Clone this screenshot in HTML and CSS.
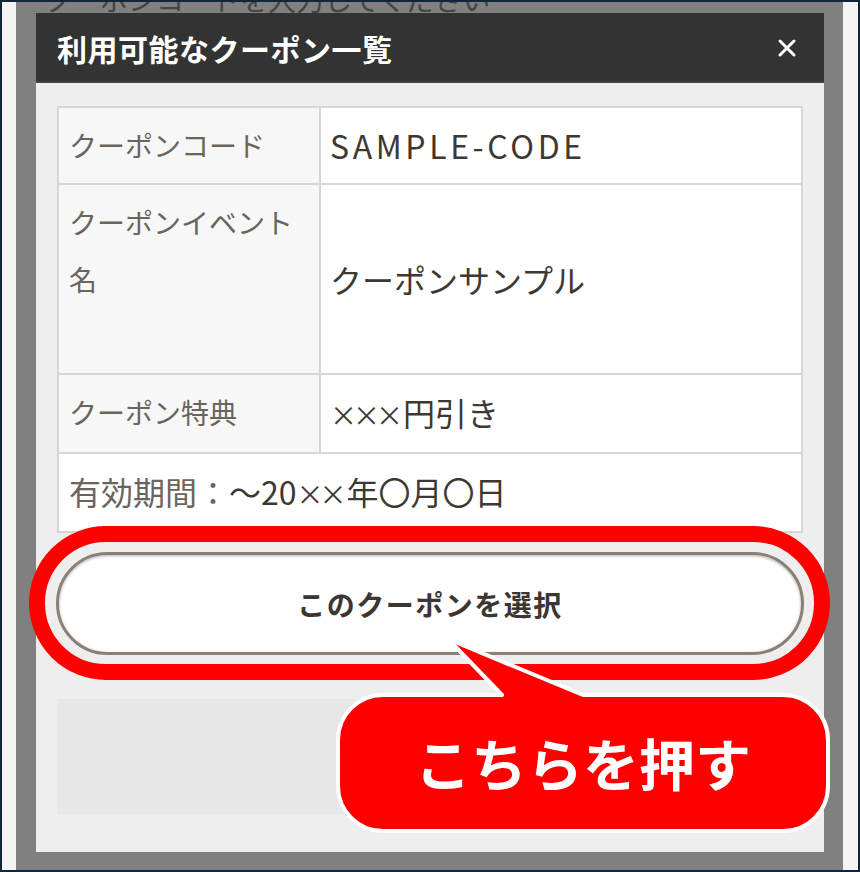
FILE: index.html
```html
<!DOCTYPE html>
<html lang="ja">
<head>
    <meta charset="UTF-8">
    <title>利用可能なクーポン一覧</title>
    <link rel="stylesheet" href="styles.css">
</head>
<body>
    <div class="frame">
        <div class="side side-left"></div>

        <!-- Dimmed page behind the modal -->
        <div class="backdrop">
            <p class="hint">クーポンコードを入力してください</p>

            <div class="modal">
                <div class="modal-header">
                    <h2 class="modal-title">利用可能なクーポン一覧</h2>
                    <button class="modal-close" aria-label="閉じる">
                        <svg width="20" height="20" viewBox="0 0 20 20">
                            <path d="M3 3 L17 17 M17 3 L3 17" stroke="#fff" stroke-width="3" stroke-linecap="round"/>
                        </svg>
                    </button>
                </div>

                <div class="modal-body">
                    <table class="coupon-table">
                        <colgroup>
                            <col class="col-label">
                            <col>
                        </colgroup>
                        <tr>
                            <th>クーポンコード</th>
                            <td class="code">SAMPLE-CODE</td>
                        </tr>
                        <tr class="row-tall">
                            <th>クーポンイベント名</th>
                            <td>クーポンサンプル</td>
                        </tr>
                        <tr>
                            <th>クーポン特典</th>
                            <td><span class="narrow">×××</span>円引き</td>
                        </tr>
                        <tr>
                            <td colspan="2" class="period"><span class="period-label">有効期間：</span>～20<span class="narrow">××</span>年〇月〇日</td>
                        </tr>
                    </table>

                    <!-- Red annotation ring around the button -->
                    <div class="highlight">
                        <button class="select-button">このクーポンを選択</button>
                    </div>

                    <div class="next-panel"></div>

                    <!-- Speech bubble annotation -->
                    <div class="callout">
                        <svg width="506" height="210" viewBox="0 0 506 210">
                            <path d="M53 67 H172 L118 11 L253 67 H453 A45 45 0 0 1 498 112 V158 A45 45 0 0 1 453 203 H53 A45 45 0 0 1 8 158 V112 A45 45 0 0 1 53 67 Z"
                                  fill="#ff0000" stroke="#fff" stroke-width="4" stroke-linejoin="round"/>
                        </svg>
                        <span class="callout-text">こちらを押す</span>
                    </div>
                </div>
            </div>
        </div>

        <div class="side side-right"></div>
    </div>
</body>
</html>
```

FILE: styles.css
```css
/* Reset */
* {
    box-sizing: border-box;
    margin: 0;
    padding: 0;
}

body {
    font-family: "Noto Sans CJK JP", "Noto Sans", sans-serif;
    background: #f3f3f3;
}

/* Screenshot frame */
.frame {
    display: flex;
    height: 872px;
    border: 2px solid #10263a;
    overflow: hidden;
}

.side {
    background: #f4f4f4;
}

.side-left {
    width: 14px;
}

.side-right {
    width: 15px;
}

/* Grey overlay over the page */
.backdrop {
    flex: 1;
    background: #808080;
    padding: 0 19px 0 20px;
    overflow: hidden;
}

.hint {
    margin-top: -17px;
    margin-left: 8px;
    font-size: 28px;
    line-height: 28px;
    color: #444;
}

/* Modal */
.modal {
    background: #eeeeee;
    height: 839px;
}

.modal-header {
    display: flex;
    align-items: center;
    justify-content: space-between;
    height: 70px;
    padding: 0 27px 0 21px;
    background: #333333;
    border-bottom: 2px solid #444;
}

.modal-title {
    font-size: 30px;
    font-weight: 700;
    letter-spacing: 0.5px;
    color: #fff;
    line-height: 1;
    padding-top: 2px;
}

.modal-close {
    display: flex;
    background: none;
    border: none;
    padding-top: 2px;
}

.modal-body {
    position: relative;
    padding: 23px 21px 0;
}

/* Coupon details table */
.coupon-table {
    width: 100%;
    border-collapse: collapse;
    table-layout: fixed;
    background: #fff;
}

.col-label {
    width: 262px;
}

.coupon-table th,
.coupon-table td {
    border: 2px solid #d6d6d6;
    padding: 9px 12px 9px 10px;
    line-height: 57px;
    text-align: left;
}

.coupon-table th {
    background: #f7f7f7;
    font-size: 28px;
    font-weight: 400;
    color: #6a645d;
    vertical-align: top;
}

.coupon-table td {
    font-size: 32px;
    color: #3d3833;
    vertical-align: middle;
    padding-left: 9px;
}

.coupon-table td.period {
    padding-left: 10px;
}

.coupon-table td.code {
    letter-spacing: 3.6px;
}

.narrow {
    font-size: 27px;
    letter-spacing: -4px;
    margin-right: 4px;
}

.row-tall {
    height: 190px;
}

.period-label {
    color: #6a645d;
}

/* Red ring */
.highlight {
    margin: -7px -27px 0 -28px;
    padding: 10px 10px 9px 11px;
    border: 16px solid #ff0000;
    border-radius: 80px;
}

.select-button {
    display: block;
    width: 100%;
    height: 103px;
    background: #fff;
    border: 3px solid #8a8075;
    border-radius: 52px;
    box-shadow: inset 0 1px 3px rgba(0, 0, 0, 0.3);
    font-family: inherit;
    font-size: 28px;
    font-weight: 700;
    letter-spacing: 1.5px;
    color: #3b3631;
}

.next-panel {
    margin-top: 19px;
    height: 115px;
    background: #e7e7e7;
}

/* Speech bubble */
.callout {
    position: absolute;
    left: 294px;
    top: 545px;
    width: 506px;
    height: 210px;
}

.callout svg {
    display: block;
}

.callout-text {
    position: absolute;
    left: 8px;
    top: 67px;
    width: 490px;
    height: 136px;
    display: flex;
    align-items: center;
    justify-content: center;
    padding-bottom: 4px;
    font-size: 56px;
    font-weight: 700;
    color: #fff;
}
```
